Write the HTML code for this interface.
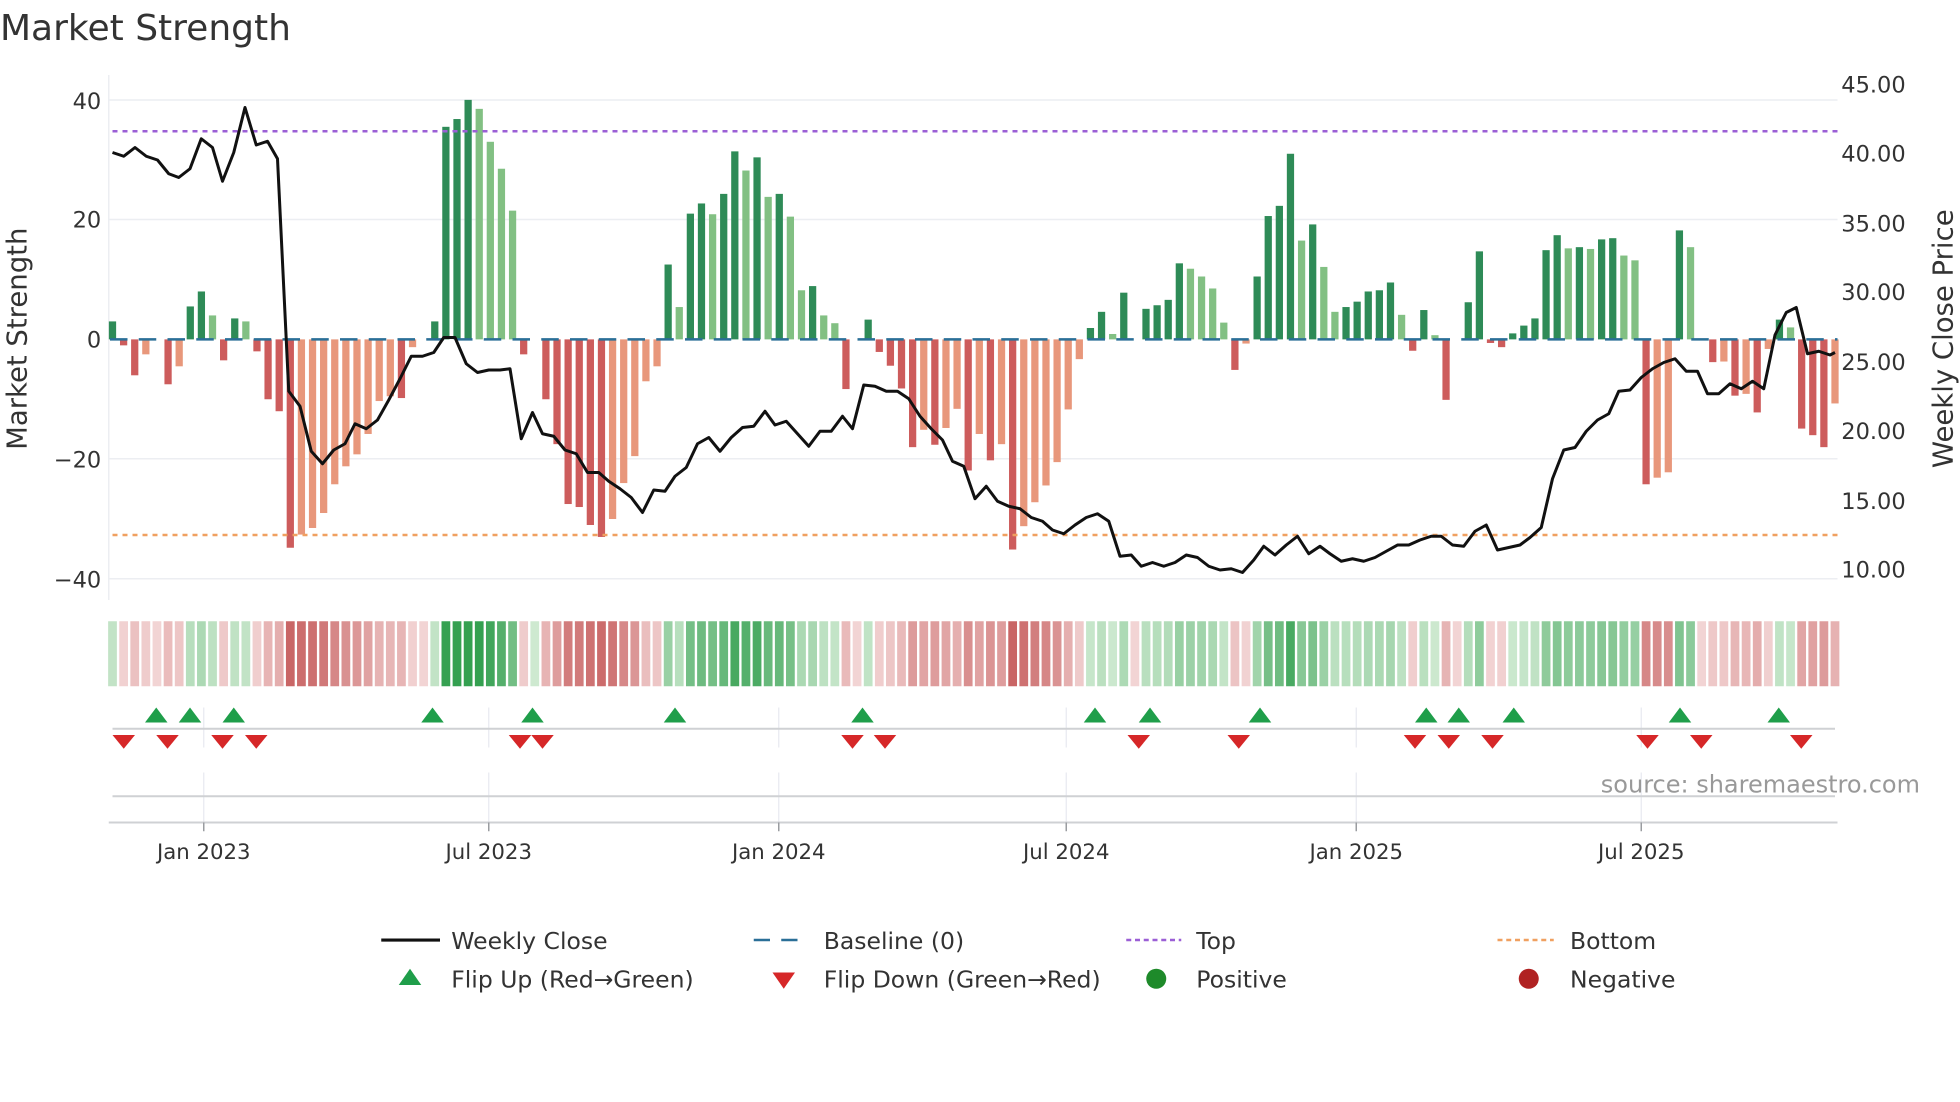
<!DOCTYPE html>
<html><head><meta charset="utf-8">
<style>
html,body{margin:0;padding:0;background:#fff;}
svg{display:block;}
text{font-family:"DejaVu Sans","Liberation Sans",sans-serif;fill:#333;}
</style></head>
<body>
<svg id="s" width="1960" height="1102" viewBox="0 0 1568 881.6" xmlns="http://www.w3.org/2000/svg">
<rect width="1568" height="882" fill="#fff"/>
<text x="0" y="32" font-size="28.8" fill="#333">Market Strength</text>
<g id="grid" stroke="#eceef2" stroke-width="1.2">
<line x1="87" x2="1470" y1="80" y2="80"/>
<line x1="87" x2="1470" y1="175.6" y2="175.6"/>
<line x1="87" x2="1470" y1="367" y2="367"/>
<line x1="87" x2="1470" y1="463" y2="463"/>
<line x1="87" x2="87" y1="60" y2="480"/>
</g>
<g font-size="18" text-anchor="end">
<text x="81" y="87">40</text>
<text x="81" y="182">20</text>
<text x="81" y="278">0</text>
<text x="81" y="374">−20</text>
<text x="81" y="470">−40</text>
</g>
<g font-size="18">
<text x="1473" y="74">45.00</text>
<text x="1473" y="129">40.00</text>
<text x="1473" y="185">35.00</text>
<text x="1473" y="240">30.00</text>
<text x="1473" y="296">25.00</text>
<text x="1473" y="351">20.00</text>
<text x="1473" y="407">15.00</text>
<text x="1473" y="462">10.00</text>
</g>
<text transform="translate(21,271) rotate(-90)" font-size="22" text-anchor="middle">Market Strength</text>
<text transform="translate(1562,271) rotate(-90)" font-size="22" text-anchor="middle">Weekly Close Price</text>
<g id="bars"></g>
<line x1="88" x2="1470" y1="271.5" y2="271.5" stroke="#2a6f97" stroke-width="2" stroke-dasharray="14,9"/>
<line x1="90" x2="1470" y1="105" y2="105" stroke="#9b5fd6" stroke-width="2" stroke-dasharray="4,4"/>
<line x1="90" x2="1470" y1="428" y2="428" stroke="#f0a060" stroke-width="2" stroke-dasharray="4,4"/>
<polyline id="price" fill="none" stroke="#111" stroke-width="2.4" stroke-linejoin="round"/>
<g id="heat"></g>
<g stroke="#e8eaf0" stroke-width="1">
<line x1="163" x2="163" y1="566" y2="598"/><line x1="391" x2="391" y1="566" y2="598"/><line x1="623" x2="623" y1="566" y2="598"/><line x1="853" x2="853" y1="566" y2="598"/><line x1="1085" x2="1085" y1="566" y2="598"/><line x1="1313" x2="1313" y1="566" y2="598"/>
<line x1="163" x2="163" y1="618" y2="658"/><line x1="391" x2="391" y1="618" y2="658"/><line x1="623" x2="623" y1="618" y2="658"/><line x1="853" x2="853" y1="618" y2="658"/><line x1="1085" x2="1085" y1="618" y2="658"/><line x1="1313" x2="1313" y1="618" y2="658"/>
</g>
<line x1="90" x2="1468" y1="583" y2="583" stroke="#cfd1d4" stroke-width="1.6"/>
<g id="flips"></g>
<line x1="90" x2="1468" y1="637" y2="637" stroke="#cfd1d4" stroke-width="1.6"/>
<text x="1536" y="634" font-size="19.2" text-anchor="end" fill="#999" style="fill:#999">source: sharemaestro.com</text>
<line x1="87" x2="1470" y1="658" y2="658" stroke="#cfd1d4" stroke-width="1.6"/>
<g stroke="#9a9ca0" stroke-width="1.2">
<line x1="163" x2="163" y1="658" y2="665"/><line x1="391" x2="391" y1="658" y2="665"/><line x1="623" x2="623" y1="658" y2="665"/><line x1="853" x2="853" y1="658" y2="665"/><line x1="1085" x2="1085" y1="658" y2="665"/><line x1="1313" x2="1313" y1="658" y2="665"/>
</g>
<g font-size="17" text-anchor="middle">
<text x="163" y="687">Jan 2023</text>
<text x="391" y="687">Jul 2023</text>
<text x="623" y="687">Jan 2024</text>
<text x="853" y="687">Jul 2024</text>
<text x="1085" y="687">Jan 2025</text>
<text x="1313" y="687">Jul 2025</text>
</g>
<g font-size="18.8">
<line x1="305" x2="352" y1="752" y2="752" stroke="#111" stroke-width="2.5"/>
<text x="361" y="759">Weekly Close</text>
<line x1="603" x2="647" y1="752" y2="752" stroke="#2a6f97" stroke-width="2" stroke-dasharray="13,9"/>
<text x="659" y="759">Baseline (0)</text>
<line x1="901" x2="945" y1="752" y2="752" stroke="#9b5fd6" stroke-width="2" stroke-dasharray="4,3"/>
<text x="957" y="759">Top</text>
<line x1="1198" x2="1243" y1="752" y2="752" stroke="#f0a060" stroke-width="2" stroke-dasharray="4,3"/>
<text x="1256" y="759">Bottom</text>
<polygon points="319,788 337,788 328,775" fill="#1f9e4a"/>
<text x="361" y="790">Flip Up (Red→Green)</text>
<polygon points="618,778 636,778 627,791" fill="#d62728"/>
<text x="659" y="790">Flip Down (Green→Red)</text>
<circle cx="925" cy="783" r="8" fill="#1e8a2a"/>
<text x="957" y="790">Positive</text>
<circle cx="1223" cy="783" r="8" fill="#b02222"/>
<text x="1256" y="790">Negative</text>
</g>
</svg>
<script>
var V=[[3,'g'],[-1,'r'],[-6,'r'],[-2.5,'l'],[0,'l'],[-7.5,'r'],[-4.5,'l'],[5.5,'g'],[8,'g'],[4,'h'],[-3.5,'r'],[3.5,'g'],[3,'h'],[-2,'r'],[-10,'r'],[-12,'r'],
[-34.8,'r'],[-32.6,'l'],[-31.5,'l'],[-29,'l'],[-24.2,'l'],[-21.2,'l'],[-19.2,'l'],[-15.8,'l'],[-10.3,'l'],[-9.5,'l'],[-9.8,'r'],[-1.3,'l'],[0,'l'],[3,'g'],
[35.5,'g'],[36.8,'g'],[40,'g'],[38.5,'h'],[33,'h'],[28.5,'h'],[21.5,'h'],[-2.5,'r'],[0.1,'h'],[-10,'r'],[-17.5,'r'],[-27.5,'r'],[-28,'r'],[-31,'r'],[-33,'r'],[-30,'l'],[-24,'l'],[-19.5,'l'],[-7,'l'],[-4.5,'l'],[12.5,'g'],
[5.4,'h'],[21,'g'],[22.7,'g'],[20.9,'h'],[24.3,'g'],[31.4,'g'],[28.2,'h'],[30.4,'g'],[23.8,'h'],[24.3,'g'],[20.5,'h'],[8.2,'h'],[8.9,'g'],[4,'h'],[2.7,'h'],[-8.3,'r'],[0,'h'],[3.3,'g'],[-2.1,'r'],[-4.4,'r'],[-8.2,'r'],[-18,'r'],[-15.1,'l'],[-17.6,'r'],[-14.8,'l'],[-11.6,'l'],[-21.9,'r'],[-15.8,'l'],[-20.2,'r'],[-17.5,'l'],[-35.1,'r'],[-31.2,'l'],[-27.2,'l'],[-24.4,'l'],[-20.5,'l'],[-11.7,'l'],[-3.3,'l'],[1.9,'g'],[4.6,'g'],[0.9,'h'],[7.8,'g'],[0,'h'],[5.1,'g'],[5.7,'g'],[6.6,'g'],[12.7,'g'],[11.8,'h'],[10.5,'h'],[8.5,'h'],[2.8,'h'],[-5.1,'r'],[-0.7,'l'],
[10.5,'g'],[20.6,'g'],[22.3,'g'],[31,'g'],[16.5,'h'],[19.2,'g'],[12.1,'h'],[4.6,'h'],[5.4,'g'],[6.3,'g'],[8,'g'],[8.2,'g'],[9.5,'g'],[4.1,'h'],[-1.9,'r'],[4.9,'g'],[0.7,'h'],[-10.1,'r'],[0,'l'],[6.2,'g'],[14.7,'g'],[-0.6,'r'],[-1.3,'r'],[1,'g'],[2.3,'g'],[3.5,'g'],[14.9,'g'],[17.4,'g'],[15.2,'h'],[15.4,'g'],[15.1,'h'],[16.7,'g'],[16.9,'g'],[14,'h'],[13.2,'h'],[-24.2,'r'],[-23.1,'l'],[-22.2,'l'],[18.2,'g'],[15.4,'h'],[0,'l'],[-3.8,'r'],[-3.7,'l'],[-9.4,'r'],[-9.1,'l'],[-12.2,'r'],[-1.6,'l'],[3.3,'g'],[2,'h'],[-14.9,'r'],[-16,'r'],[-18,'r'],[-10.7,'l']];
var C={g:'#2e8b57',h:'#82c083',r:'#cd5c5c',l:'#e8977b'};
var NS='http://www.w3.org/2000/svg';
function el(n,a,p){var e=document.createElementNS(NS,n);for(var k in a)e.setAttribute(k,a[k]);p.appendChild(e);return e;}
var bars=document.getElementById('bars'),heat=document.getElementById('heat');
var n=V.length,step=(1468-90)/(n-1);
function mix(a,b,t){var r=[];for(var i=0;i<3;i++)r.push(Math.round(a[i]+(b[i]-a[i])*t));return 'rgb('+r.join(',')+')';}
for(var i=0;i<n;i++){var v=V[i][0],x=90+i*step,y0=271.5,y=y0-v*4.79;
 if(Math.abs(v)>0.2)el('rect',{x:x-2.9,y:Math.min(y,y0),width:5.8,height:Math.abs(y-y0),fill:C[V[i][1]]},bars);
 var t=Math.min(Math.abs(v)/36,1);t=0.08+0.92*t;
 var c=v>0?mix([220,240,220],[52,160,80],t):mix([246,222,222],[200,98,98],t);
 el('rect',{x:x-3.5,y:497,width:7,height:52,fill:c},heat);}
var P=[[90,122],[99,125],[108,118],[117,125],[126,128],[135,139],[143,142],[152,135],[161,111],[170,118],[178,145],[187,122],[196,86],[205,116],[214,113],[222,127],[231,313],[240,325],[249,361],[258,371],[267,360],[276,355],[284,339],[293,343],[302,336],[311,320],[320,303],[329,285],[338,285],[347,282],[355,270],[364,270],[373,291],[382,298],[391,296],[400,296],[408,295],[417,351],[426,330],[434,347],[443,349],[452,360],[461,363],[470,378],[479,378],[487,385],[496,391],[505,398],[514,410],[523,392],[532,393],[540,381],[549,374],[558,355],[567,350],[576,361],[585,350],[594,342],[603,341],[612,329],[620,340],[629,337],[638,347],[647,357],[656,345],[665,345],[674,333],[682,343],[691,308],[700,309],[709,313],[718,313],[727,319],[736,333],[745,343],[754,352],[762,369],[771,373],[780,399],[789,389],[798,401],[807,405],[816,407],[825,414],[834,417],[842,424],[851,427],[860,420],[869,414],[878,411],[887,417],[896,445],[905,444],[913,453],[922,450],[931,453],[940,450],[949,444],[958,446],[967,453],[976,456],[985,455],[994,458],[1003,448],[1011,437],[1020,444],[1029,436],[1038,429],[1047,443],[1056,437],[1064,443],[1073,449],[1082,447],[1091,449],[1100,446],[1109,441],[1118,436],[1127,436],[1136,432],[1145,429],[1153,429],[1162,436],[1171,437],[1180,425],[1189,420],[1198,440],[1207,438],[1216,436],[1224,430],[1233,422],[1242,383],[1251,360],[1260,358],[1269,345],[1278,336],[1287,331],[1295,313],[1304,312],[1313,302],[1322,295],[1331,290],[1340,287],[1349,297],[1358,297],[1366,315],[1375,315],[1384,307],[1393,311],[1402,305],[1411,311],[1420,268],[1429,250],[1437,246],[1446,283],[1455,281],[1464,284],[1468,282]];
document.getElementById('price').setAttribute('points',P.map(function(p){return p.join(',')}).join(' '));
var f=document.getElementById('flips');
[125,152,187,346,426,540,690,876,920,1008,1141,1167,1211,1344,1423].forEach(function(x){el('polygon',{points:(x-9)+',578 '+(x+9)+',578 '+x+',566',fill:'#1f9e4a'},f);});
[99,134,178,205,416,434,682,708,911,991,1132,1159,1194,1318,1361,1441].forEach(function(x){el('polygon',{points:(x-9)+',588 '+(x+9)+',588 '+x+',599',fill:'#d62728'},f);});
</script>
</body></html>
